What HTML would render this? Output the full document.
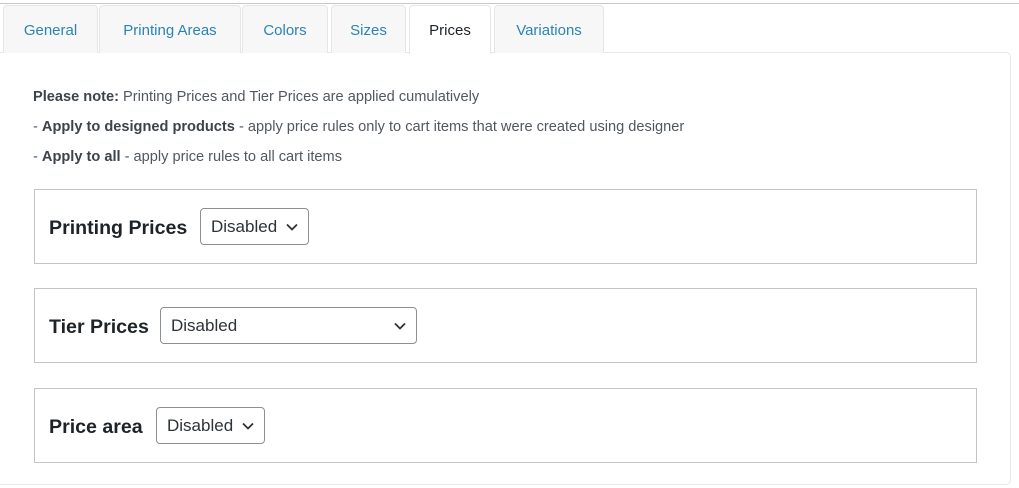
<!DOCTYPE html>
<html><head><style>
*{box-sizing:border-box;margin:0;padding:0}
body{width:1019px;height:488px;background:#fff;font-family:"Liberation Sans",sans-serif;position:relative;overflow:hidden}
.topline{position:absolute;left:0;top:3px;width:1019px;height:1px;background:#c8c8c8}
.tab{position:absolute;top:5px;height:48px;background:#f7f7f7;border:1px solid #e6e6e6;border-bottom:none;border-radius:4px 4px 0 0;color:#2a84b5;font-size:15px;text-align:center;line-height:50px}
.tab.active{background:#fff;color:#1d2327;height:49px;z-index:2}
.panel{position:absolute;left:-6px;top:52px;width:1017px;height:433px;border:1px solid #e8e8e8;border-radius:5px}
.note{position:absolute;left:33px;font-size:14.6px;color:#50575e;white-space:nowrap}
.note b{color:#3c434a}
.box{position:absolute;left:34px;width:943px;height:75px;border:1px solid #c3c4c7}
.lbl{position:absolute;left:14px;top:27px;font-size:19.6px;font-weight:bold;color:#1d2327}
.sel{position:absolute;top:18px;height:37px;border:1px solid #8c8f94;border-radius:4px;font-size:17px;color:#2c3338;line-height:35px;padding-left:10px}
.sel svg{position:absolute;right:10px;top:14px}
</style></head><body>
<div class="topline"></div>
<div class="panel"></div>
<div class="tab" style="left:3px;width:95px">General</div>
<div class="tab" style="left:99px;width:142px">Printing Areas</div>
<div class="tab" style="left:242px;width:86px">Colors</div>
<div class="tab" style="left:331px;width:75px">Sizes</div>
<div class="tab active" style="left:409px;width:82px">Prices</div>
<div class="tab" style="left:494px;width:110px">Variations</div>
<div class="note" style="top:89px"><b>Please note:</b> Printing Prices and Tier Prices are applied cumulatively</div>
<div class="note" style="top:119px">- <b>Apply to designed products</b> - apply price rules only to cart items that were created using designer</div>
<div class="note" style="top:149px">- <b>Apply to all</b> - apply price rules to all cart items</div>
<div class="box" style="top:189px"><div class="lbl">Printing Prices</div>
<div class="sel" style="left:165px;width:109px">Disabled<svg width="12" height="8" viewBox="0 0 12 8"><path d="M1 1.5l5 5 5-5" stroke="#2c3338" stroke-width="1.8" fill="none"/></svg></div></div>
<div class="box" style="top:288px"><div class="lbl">Tier Prices</div>
<div class="sel" style="left:125px;width:257px">Disabled<svg width="12" height="8" viewBox="0 0 12 8"><path d="M1 1.5l5 5 5-5" stroke="#2c3338" stroke-width="1.8" fill="none"/></svg></div></div>
<div class="box" style="top:388px"><div class="lbl">Price area</div>
<div class="sel" style="left:121px;width:109px">Disabled<svg width="12" height="8" viewBox="0 0 12 8"><path d="M1 1.5l5 5 5-5" stroke="#2c3338" stroke-width="1.8" fill="none"/></svg></div></div>
</body></html>
